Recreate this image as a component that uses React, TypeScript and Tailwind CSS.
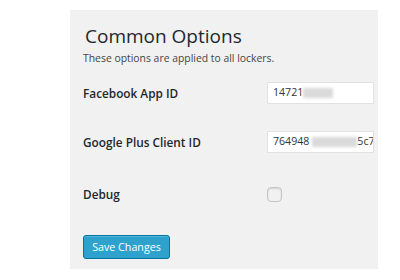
import React from "react";

const font = { fontFamily: '"Open Sans", "Noto Sans", sans-serif' };

function Blur({ w }: { w: number }) {
  return (
    <span className="inline-flex h-[14px] items-center shrink-0" style={{ width: w }}>
      <span className="block h-[10px] w-full bg-[#dadada] blur-[1.5px]" />
    </span>
  );
}

export default function App() {
  return (
    <div className="w-[400px] h-[280px] bg-white" style={font}>
      <div className="ml-[70px] mt-[10px] w-[308px] h-[259px] bg-[#f1f1f1] pl-[13px] pt-[12px] flex flex-col">
        <h2 className="ml-[2px] text-[19px] leading-[28px] text-[#23282d]">Common Options</h2>
        <p className="text-[10.4px] leading-[16px] text-[#444]">These options are applied to all lockers.</p>
        <div className="mt-[16px] grid grid-cols-[184px_1fr] items-center gap-y-[27px] text-[11.8px] text-[#23282d]">
          <div className="font-semibold pt-[2px]">Facebook App ID</div>
          <div className="h-[22px] w-[107px] bg-white border border-[#e2e2e2] flex items-center pl-[5px] overflow-hidden whitespace-nowrap text-[10.6px] text-[#333]">
            14721<Blur w={30} />
          </div>
          <div className="font-semibold pt-[2px]">Google Plus Client ID</div>
          <div className="h-[22px] w-[107px] bg-white border border-[#e2e2e2] flex items-center pl-[5px] overflow-hidden whitespace-nowrap text-[10.6px] text-[#333]">
            764948<span className="w-[3px] shrink-0" /><Blur w={45} /><span className="shrink-0">5c7</span>
          </div>
          <div className="font-semibold mt-[6px]">Debug</div>
          <div className="mt-[6px]">
            <div className="w-[15px] h-[15px] rounded-[4px] border border-[#c4c4c4] bg-[#f1f1f1] shadow-[inset_0_1px_2px_rgba(0,0,0,0.12)]" />
          </div>
        </div>
        <div className="mt-[29px]">
          <button className="h-[24px] w-[87px] rounded-[3px] bg-[#2ea2cc] border border-[#0074a2] text-white text-[10.7px] shadow-[inset_0_1px_0_rgba(120,200,230,0.5)]">
            Save Changes
          </button>
        </div>
      </div>
    </div>
  );
}
